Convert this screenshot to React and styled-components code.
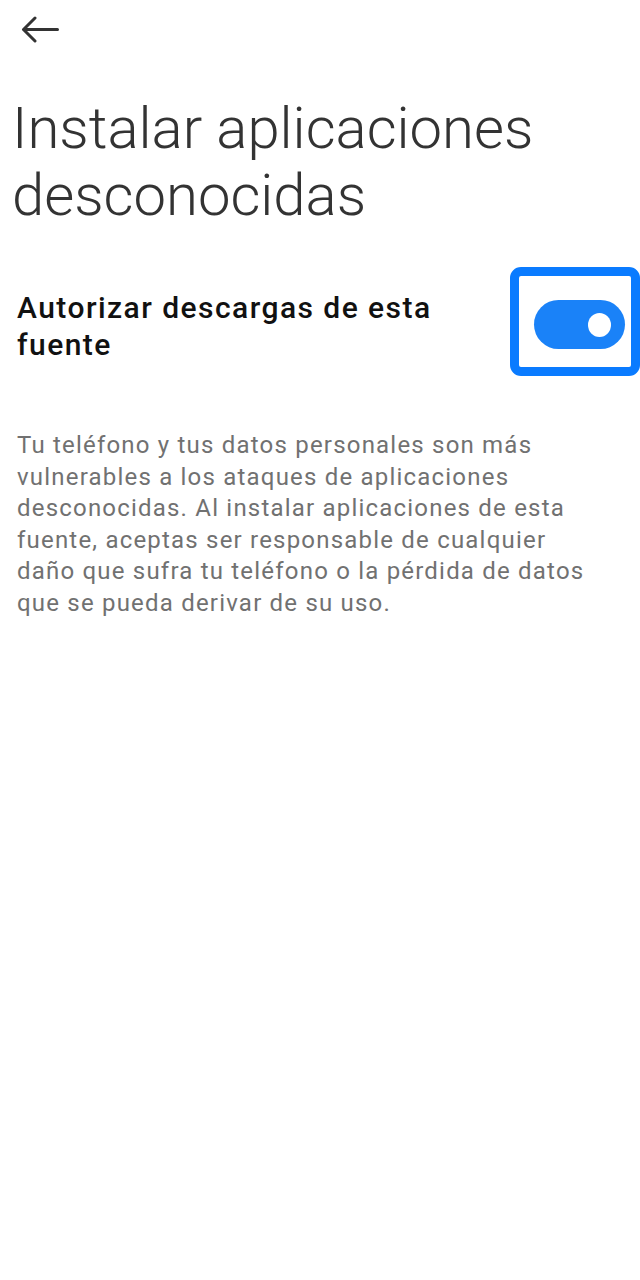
import React from "react";
import styled, { createGlobalStyle } from "styled-components";

const GlobalStyle = createGlobalStyle`
  body {
    margin: 0;
    background: #ffffff;
    font-family: Roboto, "Noto Sans", sans-serif;
  }
`;

function App() {
  return (
    <Page>
      <GlobalStyle />
      <Header>
        <BackButton aria-label="Atrás">
          <svg width="38" height="28" viewBox="0 0 38 28" fill="none">
            <path
              d="M2.5 13.5 H36.5 M14 2 L2.5 13.5 L14 25"
              stroke="#333333"
              strokeWidth="3"
              strokeLinecap="round"
              strokeLinejoin="round"
            />
          </svg>
        </BackButton>
      </Header>
      <Title>Instalar aplicaciones desconocidas</Title>
      <SettingRow>
        <SettingLabel>Autorizar descargas de esta fuente</SettingLabel>
        <Highlight>
          <Switch $on>
            <Knob />
          </Switch>
        </Highlight>
      </SettingRow>
      <Warning>
        Tu teléfono y tus datos personales son más vulnerables a los ataques de
        aplicaciones desconocidas. Al instalar aplicaciones de esta fuente,
        aceptas ser responsable de cualquier daño que sufra tu teléfono o la
        pérdida de datos que se pueda derivar de su uso.
      </Warning>
    </Page>
  );
}

const Page = styled.div`
  width: 640px;
  min-height: 1280px;
  background: #ffffff;
  display: flex;
  flex-direction: column;
`;

const Header = styled.div`
  height: 58px;
  display: flex;
  align-items: center;
  padding-left: 21px;
`;

const BackButton = styled.div`
  display: flex;
  align-items: center;
  height: 28px;
  margin-top: 1px;
`;

const Title = styled.h1`
  margin: 37px 0 0;
  padding: 0 40px 0 12px;
  font-family: Roboto, sans-serif;
  font-weight: 300;
  font-size: 58px;
  line-height: 67px;
  color: #333333;
`;

const SettingRow = styled.div`
  margin-top: 38px;
  display: flex;
  align-items: flex-start;
  justify-content: space-between;
  padding-left: 17px;
`;

const SettingLabel = styled.div`
  flex: 1;
  margin-right: 24px;
  padding-top: 22px;
  font-weight: 500;
  font-size: 30px;
  line-height: 37px;
  letter-spacing: 1.45px;
  color: #111111;
`;

const Highlight = styled.div`
  box-sizing: border-box;
  flex-shrink: 0;
  width: 130px;
  height: 109px;
  border: 9px solid #0a7bff;
  border-radius: 11px;
  display: flex;
  align-items: center;
  justify-content: center;
  padding: 6px 0 0 8px;
`;

const Switch = styled.div`
  width: 91px;
  height: 49px;
  border-radius: 25px;
  background: ${(p) => (p.$on ? "#1a82f8" : "#c9c9c9")};
  display: flex;
  align-items: center;
  justify-content: ${(p) => (p.$on ? "flex-end" : "flex-start")};
  padding: 0 14px;
  box-sizing: border-box;
`;

const Knob = styled.div`
  width: 23px;
  height: 24px;
  border-radius: 50%;
  background: #ffffff;
`;

const Warning = styled.p`
  margin: 54px 0 0;
  padding: 0 40px 0 17px;
  font-size: 24px;
  line-height: 31.5px;
  letter-spacing: 1.2px;
  color: #717171;
`;

export default App;
